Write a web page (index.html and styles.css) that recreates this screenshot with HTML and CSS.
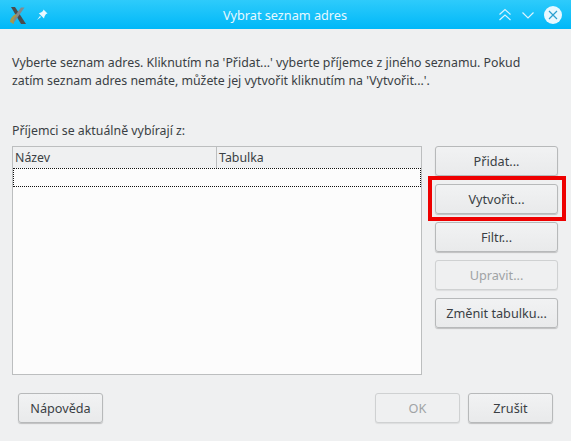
FILE: index.html
```html
<!DOCTYPE html>
<html lang="cs">
<head>
<meta charset="utf-8">
<title>Vybrat seznam adres</title>
<link rel="stylesheet" href="styles.css">
</head>
<body>
<div class="window">
  <header class="titlebar">
    <div class="title-left">
      <svg class="app-icon" width="18" height="18" viewBox="0 0 18 18">
        <path d="M2 1 L6 1 L17 18 L12 18 Z" fill="#4a4c4e"/>
        <path d="M15.5 1.5 L12 1.5 L2 15 L4 18 L7.5 13 Z" fill="#85888b"/>
        <path d="M6.5 8 C3 10 1 13 1 16 L5 18 C4 13 5 11 8 10 Z" fill="#a9994a"/>
      </svg>
      <svg class="pin-icon" width="12" height="12" viewBox="0 0 12 12">
        <path d="M7.5 0.5 L11.5 4.5 L10 5 L8.5 7.5 L8 9.5 L2.8 4.2 L5 3.5 L7 2 Z M4 7 L1 11 L5 8 Z" fill="#eaf8ff"/>
      </svg>
    </div>
    <div class="title-text">Vybrat seznam adres</div>
    <div class="title-right">
      <svg width="14" height="14" viewBox="0 0 14 14" fill="none" stroke="#d8f4ff" stroke-width="1.2">
        <path d="M1.5 6.5 L7 1.5 L12.5 6.5 M1.5 12 L7 7 L12.5 12"/>
      </svg>
      <svg width="14" height="14" viewBox="0 0 14 14" fill="none" stroke="#d8f4ff" stroke-width="1.2">
        <path d="M1.5 4.5 L7 10 L12.5 4.5"/>
      </svg>
      <svg width="18" height="18" viewBox="0 0 18 18">
        <circle cx="9" cy="9" r="9" fill="#e8f8ff"/>
        <path d="M5 5 L13 13 M13 5 L5 13" stroke="#2a9fd0" stroke-width="1.2" fill="none"/>
      </svg>
    </div>
  </header>
  <main class="content">
    <p class="intro">Vyberte seznam adres. Kliknutím na 'Přidat...' vyberte příjemce z jiného seznamu. Pokud<br>zatím seznam adres nemáte, můžete jej vytvořit kliknutím na 'Vytvořit...'.</p>
    <div class="label">Příjemci se aktuálně vybírají z:</div>
    <div class="columns">
      <div class="table">
        <div class="thead">
          <div class="th th-name">Název</div>
          <div class="th">Tabulka</div>
        </div>
        <div class="row"></div>
      </div>
      <div class="side">
        <button class="btn">Přidat...</button>
        <button class="btn highlighted">Vytvořit...</button>
        <button class="btn">Filtr...</button>
        <button class="btn disabled">Upravit...</button>
        <button class="btn">Změnit tabulku...</button>
      </div>
    </div>
    <div class="footer">
      <button class="btn wide">Nápověda</button>
      <div class="footer-right">
        <button class="btn wide disabled">OK</button>
        <button class="btn wide">Zrušit</button>
      </div>
    </div>
  </main>
</div>
</body>
</html>
```
FILE: styles.css
```css
* { box-sizing: border-box; }
html, body { margin: 0; padding: 0; }
body {
  width: 571px;
  height: 441px;
  overflow: hidden;
  font-family: "Noto Sans", sans-serif;
  font-size: 12.35px;
  color: #3a3f44;
  background: #eff0f1;
}
.window { display: flex; flex-direction: column; height: 441px; }
.titlebar {
  height: 29px;
  flex: none;
  display: flex;
  align-items: center;
  justify-content: space-between;
  padding: 0 9px;
  background: linear-gradient(#2ecbfb, #00b8f8);
  position: relative;
}
.title-left { display: flex; align-items: center; gap: 9px; }
.title-right { display: flex; align-items: center; gap: 9px; }
.title-text {
  position: absolute;
  left: -1px; right: 0;
  text-align: center;
  color: #e6f8ff;
  font-size: 12.7px;
}
.content {
  flex: 1;
  display: flex;
  flex-direction: column;
  padding: 25px 13px 18px 12px;
}
.intro { margin: 0; line-height: 18px; height: 36px; white-space: nowrap; }
.label { margin-top: 32px; line-height: 17px; height: 17px; }
.columns { display: flex; gap: 13px; margin-top: 7px; height: 229px; }
.table {
  width: 410px;
  border: 1px solid #bcbebf;
  background: #fcfcfc;
  display: flex;
  flex-direction: column;
}
.thead { display: flex; height: 21px; background: #eff0f1; flex: none; }
.th { padding: 0 2px; line-height: 21px; }
.th-name { width: 204px; border-right: 1px solid #bcbebf; }
.row { height: 19px; border: 1px dotted #111; }
.side { display: flex; flex-direction: column; gap: 8px; width: 123px; }
.btn {
  position: relative;
  height: 30px;
  padding: 0;
  font-family: inherit;
  font-size: 12.7px;
  color: inherit;
  border: 1px solid #b7b9ba;
  border-radius: 3px;
  background: linear-gradient(#f1f2f3, #e9eaeb);
  box-shadow: 0 1px 1px rgba(0, 0, 0, 0.2);
}
.btn.disabled {
  color: #a0a3a5;
  border-color: #cfd1d2;
  background: #eff0f1;
  box-shadow: 0 1px 1px rgba(0, 0, 0, 0.08);
}
.highlighted::after {
  content: "";
  position: absolute;
  left: -8px; right: -9px;
  top: -9px; bottom: -8px;
  border: 4px solid #ee0000;
}
.footer {
  display: flex;
  justify-content: space-between;
  margin-top: 18px;
  padding: 0 5px 0 6px;
}
.footer-right { display: flex; gap: 8px; }
.wide { width: 85px; }
```
